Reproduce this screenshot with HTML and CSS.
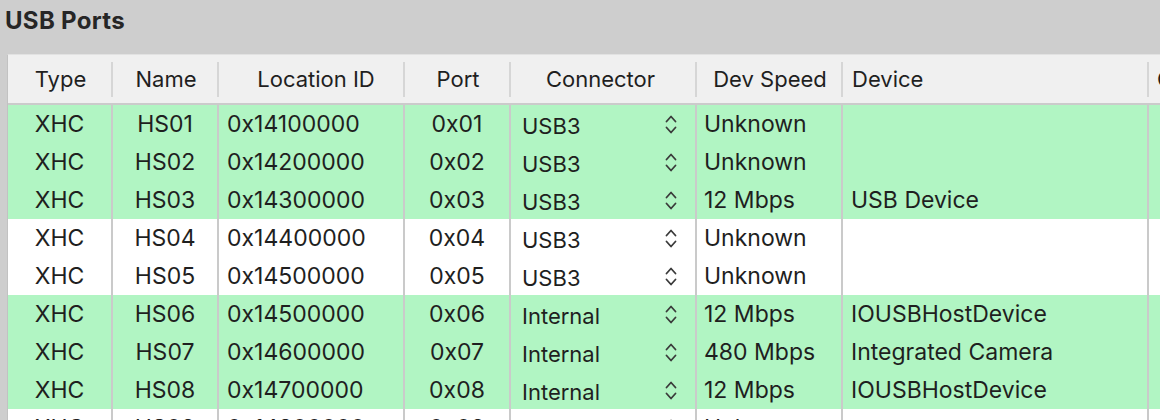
FILE: index.html
```html
<!DOCTYPE html>
<html>
<head>
<meta charset="utf-8">
<link rel="stylesheet" href="styles.css">
</head>
<body>
<div class="panel">
  <h1 class="title">USB Ports</h1>
  <div class="table">
    <div class="row head">
      <div class="c c-type">Type</div>
      <div class="c c-name">Name</div>
      <div class="c c-loc">Location ID</div>
      <div class="c c-port">Port</div>
      <div class="c c-conn">Connector</div>
      <div class="c c-speed">Dev Speed</div>
      <div class="c c-dev">Device</div>
      <div class="c c-more">Comment</div>
    </div>
    <div class="body">
      <div class="row on"><div class="c c-type">XHC</div><div class="c c-name">HS01</div><div class="c c-loc">0x14100000</div><div class="c c-port">0x01</div><div class="c c-conn"><span>USB3</span><svg class="chev" viewBox="0 0 12 21"><path d="M1.5 7.5L6 2.5L10.5 7.5M1.5 13.5L6 18.5L10.5 13.5"/></svg></div><div class="c c-speed">Unknown</div><div class="c c-dev"></div><div class="c c-more"></div></div>
      <div class="row on"><div class="c c-type">XHC</div><div class="c c-name">HS02</div><div class="c c-loc">0x14200000</div><div class="c c-port">0x02</div><div class="c c-conn"><span>USB3</span><svg class="chev" viewBox="0 0 12 21"><path d="M1.5 7.5L6 2.5L10.5 7.5M1.5 13.5L6 18.5L10.5 13.5"/></svg></div><div class="c c-speed">Unknown</div><div class="c c-dev"></div><div class="c c-more"></div></div>
      <div class="row on"><div class="c c-type">XHC</div><div class="c c-name">HS03</div><div class="c c-loc">0x14300000</div><div class="c c-port">0x03</div><div class="c c-conn"><span>USB3</span><svg class="chev" viewBox="0 0 12 21"><path d="M1.5 7.5L6 2.5L10.5 7.5M1.5 13.5L6 18.5L10.5 13.5"/></svg></div><div class="c c-speed">12 Mbps</div><div class="c c-dev">USB Device</div><div class="c c-more"></div></div>
      <div class="row"><div class="c c-type">XHC</div><div class="c c-name">HS04</div><div class="c c-loc">0x14400000</div><div class="c c-port">0x04</div><div class="c c-conn"><span>USB3</span><svg class="chev" viewBox="0 0 12 21"><path d="M1.5 7.5L6 2.5L10.5 7.5M1.5 13.5L6 18.5L10.5 13.5"/></svg></div><div class="c c-speed">Unknown</div><div class="c c-dev"></div><div class="c c-more"></div></div>
      <div class="row"><div class="c c-type">XHC</div><div class="c c-name">HS05</div><div class="c c-loc">0x14500000</div><div class="c c-port">0x05</div><div class="c c-conn"><span>USB3</span><svg class="chev" viewBox="0 0 12 21"><path d="M1.5 7.5L6 2.5L10.5 7.5M1.5 13.5L6 18.5L10.5 13.5"/></svg></div><div class="c c-speed">Unknown</div><div class="c c-dev"></div><div class="c c-more"></div></div>
      <div class="row on"><div class="c c-type">XHC</div><div class="c c-name">HS06</div><div class="c c-loc">0x14500000</div><div class="c c-port">0x06</div><div class="c c-conn"><span>Internal</span><svg class="chev" viewBox="0 0 12 21"><path d="M1.5 7.5L6 2.5L10.5 7.5M1.5 13.5L6 18.5L10.5 13.5"/></svg></div><div class="c c-speed">12 Mbps</div><div class="c c-dev">IOUSBHostDevice</div><div class="c c-more"></div></div>
      <div class="row on"><div class="c c-type">XHC</div><div class="c c-name">HS07</div><div class="c c-loc">0x14600000</div><div class="c c-port">0x07</div><div class="c c-conn"><span>Internal</span><svg class="chev" viewBox="0 0 12 21"><path d="M1.5 7.5L6 2.5L10.5 7.5M1.5 13.5L6 18.5L10.5 13.5"/></svg></div><div class="c c-speed">480 Mbps</div><div class="c c-dev">Integrated Camera</div><div class="c c-more"></div></div>
      <div class="row on"><div class="c c-type">XHC</div><div class="c c-name">HS08</div><div class="c c-loc">0x14700000</div><div class="c c-port">0x08</div><div class="c c-conn"><span>Internal</span><svg class="chev" viewBox="0 0 12 21"><path d="M1.5 7.5L6 2.5L10.5 7.5M1.5 13.5L6 18.5L10.5 13.5"/></svg></div><div class="c c-speed">12 Mbps</div><div class="c c-dev">IOUSBHostDevice</div><div class="c c-more"></div></div>
      <div class="row"><div class="c c-type">XHC</div><div class="c c-name">HS09</div><div class="c c-loc">0x14800000</div><div class="c c-port">0x09</div><div class="c c-conn"><span>USB3</span><svg class="chev" viewBox="0 0 12 21"><path d="M1.5 7.5L6 2.5L10.5 7.5M1.5 13.5L6 18.5L10.5 13.5"/></svg></div><div class="c c-speed">Unknown</div><div class="c c-dev"></div><div class="c c-more"></div></div>
    </div>
  </div>
</div>
</body>
</html>
```
FILE: styles.css
```css
html, body {
  margin: 0;
  padding: 0;
  background: #cecece;
  overflow: hidden;
}
body {
  width: 1160px;
  height: 420px;
  font-family: "Inter", "Liberation Sans", sans-serif;
  color: #1f1f1f;
}
.panel {
  padding-left: 7px;
}
.title {
  margin: 0 0 0 -2px;
  height: 54px;
  box-sizing: border-box;
  padding-top: 6px;
  font-size: 24px;
  font-weight: 700;
  line-height: 30px;
  color: #262626;
  letter-spacing: 0.3px;
}
.table {
  background: #ffffff;
  border-left: 1px solid #c2c2c2;
  border-top: 1px solid #e2e2e2;
  width: 1200px;
}
.row {
  display: grid;
  grid-template-columns: 105px 106px 186px 106px 186px 146px 306px 100px;
  height: 38px;
  font-size: 23px;
}
.row.on {
  background: #b1f5c3;
}
.c {
  box-sizing: border-box;
  border-right: 2px solid #cacaca;
  display: flex;
  align-items: center;
  white-space: nowrap;
  overflow: hidden;
}
.head {
  height: 48px;
  font-size: 22px;
  background: #f0f0f0;
  border-bottom: 2px solid #cbcbcb;
}
.head .c {
  border-right: none;
  position: relative;
  justify-content: center;
}
.head .c::after {
  content: "";
  position: absolute;
  right: 0;
  top: 7px;
  bottom: 6px;
  width: 2px;
  background: #d6d6d6;
}
.head .c-dev {
  justify-content: flex-start;
  padding-left: 9px;
}
.head .c-more {
  justify-content: flex-start;
  padding-left: 8px;
}
.c-type, .c-name, .c-port {
  justify-content: center;
}
.c-loc {
  padding-left: 8px;
}
.c-conn {
  padding-left: 11px;
  padding-right: 18px;
  justify-content: space-between;
}
.c-conn span {
  position: relative;
  top: 2px;
  font-size: 22px;
}
.chev {
  width: 12px;
  height: 21px;
  fill: none;
  stroke: #3a3a3a;
  stroke-width: 1.8;
  stroke-linecap: round;
  stroke-linejoin: round;
}
.c-speed {
  padding-left: 7px;
}
.head .c-speed {
  padding-left: 0;
}
.c-dev {
  padding-left: 8px;
}
.c-more {
  border-right: none;
  justify-content: flex-start;
  padding-left: 10px;
}
```
